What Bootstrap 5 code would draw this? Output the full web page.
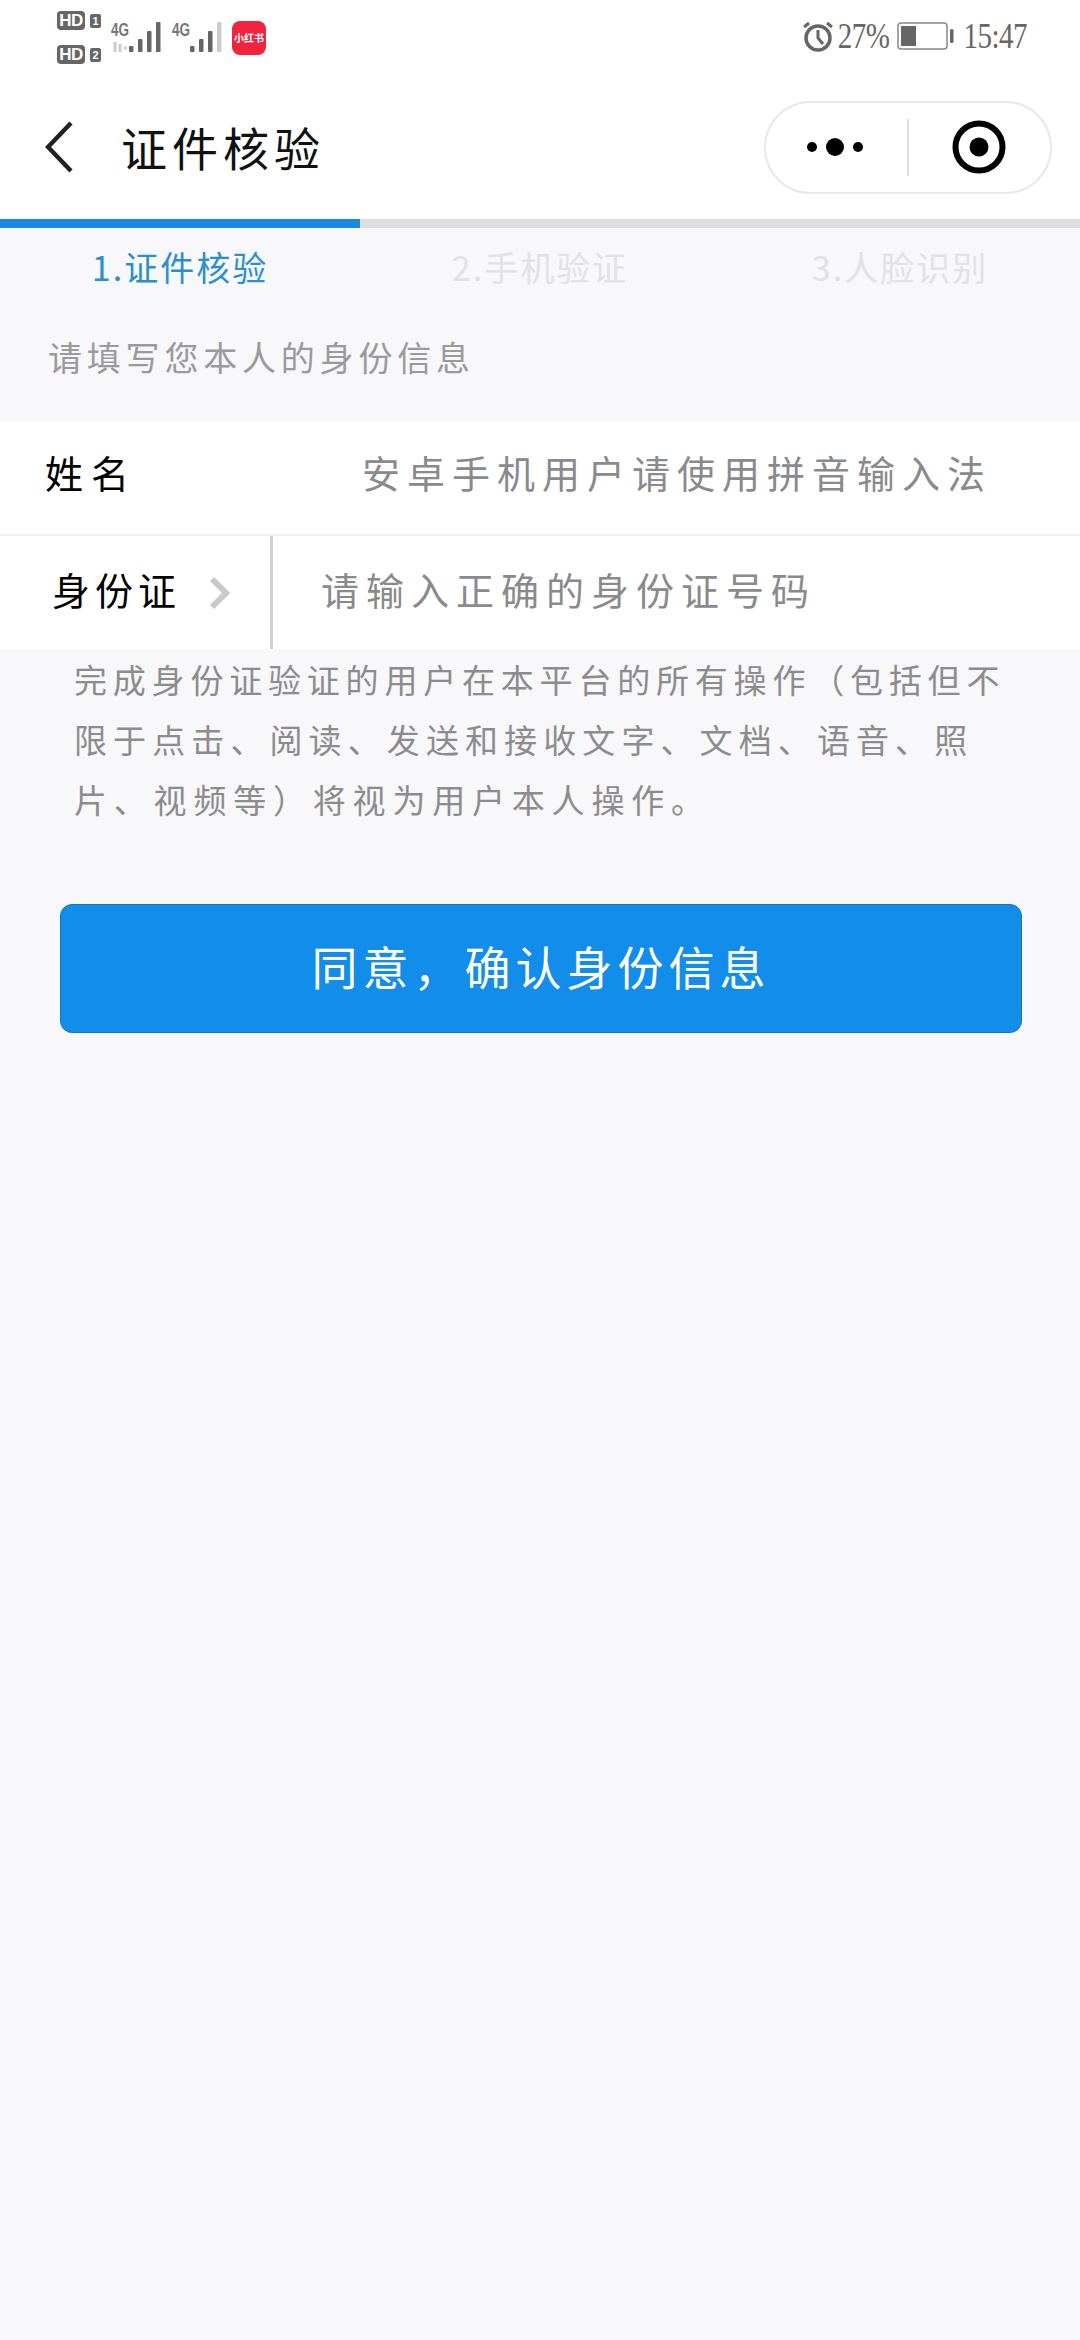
<!DOCTYPE html>
<html lang="zh-CN">
<head>
  <meta charset="UTF-8" />
  <title>证件核验</title>
  <link href="https://cdn.jsdelivr.net/npm/bootstrap@5.3.3/dist/css/bootstrap.min.css" rel="stylesheet" />
  <style>
    body { background: #f8f7f9; font-family: "Noto Sans CJK SC", "Liberation Sans", sans-serif; width: 1080px; min-height: 2340px; }
    .status-strip { height: 80px; padding: 11px 53px 0 57px; background: #fff; color: #666; }
    .hd-stack { width: 46px; gap: 15px; }
    .hd-line { height: 19px; gap: 5px; }
    .hd-tag { width: 28px; height: 19px; background: #666; color: #fff; border-radius: 4px; font: 700 17px/19px "Liberation Sans", sans-serif; letter-spacing: -0.5px; text-align: center; }
    .sim-tag { width: 11px; height: 14px; background: #666; color: #fff; border-radius: 2px; font: 700 11px/14px "Liberation Sans", sans-serif; text-align: center; }
    .app-tag { width: 34px; height: 34px; margin: 10px 0 0 10px; background: #f0243f; color: #fff; border-radius: 8px; font-size: 10px; line-height: 34px; font-weight: 700; text-align: center; white-space: nowrap; }
    .signal-svg { margin: 9px 0 0 8px; }
    .status-right { height: 42px; margin-top: 4px; font: 400 29px/42px "Liberation Serif", serif; letter-spacing: -0.5px; }
    .status-right span { display: inline-block; transform: scaleY(1.2); }
    .title-bar { height: 139px; background: #fff; padding: 0 28px 5px 45px; }
    .title-bar h1 { font-size: 46px; font-weight: 400; letter-spacing: 5px; margin: 0 0 0 48px; color: #111; }
    .capsule { width: 288px; height: 93px; border: 2px solid #e9e9e9; border-radius: 47px; }
    .capsule-line { width: 2px; height: 57px; background: #ddd; }
    .capsule-cell { width: 143px; }
    .step-bar { height: 9px; border-radius: 0; background: #dedede; }
    .step-bar .progress-bar { background: #1a8ae0; }
    .step-tabs { padding-top: 16px; height: 84px; font-size: 34px; letter-spacing: 2px; line-height: 46px; color: #e2e2e5; }
    .step-tabs .now { color: #2b8fcf; }
    .form-tip { height: 109px; padding: 20px 0 0 48px; font-size: 34px; line-height: 50px; letter-spacing: 4.8px; color: #9a9a9c; }
    .field-row { background: #fff; height: 115px; border-bottom: 2px solid #f1f1f2; font-size: 38px; letter-spacing: 7px; color: #8a8a8c; }
    .field-row.last-field { height: 113px; border-bottom: 0; }
    .field-row .up-a { margin-bottom: 12px; }
    .field-row .up-b { margin-bottom: 8px; }
    .field-name { color: #000; }
    .name-cell { margin-left: 45px; width: 317px; letter-spacing: 8px; }
    .id-cell { width: 270px; padding-left: 52px; }
    .id-cell .field-name { width: 157px; letter-spacing: 5px; }
    .id-sep { width: 3px; height: 100%; background: #d2d2d4; }
    .agree-text { padding: 0 0 0 74px; font-size: 33px; line-height: 60px; color: #8c8c8e; white-space: nowrap; }
    .line-a { letter-spacing: 5.8px; }
    .line-b { letter-spacing: 6.1px; }
    .line-c { letter-spacing: 6.8px; }
    .agree-btn { width: 962px; height: 129px; margin: 75px 0 0 60px; padding-bottom: 12px; background: #128dea; border: 1px solid #0f78c4; border-radius: 12px; color: #fff; font-size: 46px; letter-spacing: 5px; }
    .agree-btn:hover { background: #128dea; color: #fff; border-color: #0f78c4; }
  </style>
</head>
<body>
  <div class="status-strip d-flex justify-content-between align-items-start">
    <div class="d-flex align-items-start">
      <div class="hd-stack d-flex flex-column">
        <div class="hd-line d-flex align-items-center"><span class="hd-tag">HD</span><span class="sim-tag">1</span></div>
        <div class="hd-line d-flex align-items-center"><span class="hd-tag">HD</span><span class="sim-tag">2</span></div>
      </div>
      <svg class="signal-svg" width="111" height="46" viewBox="0 0 111 46">
        <text x="0" y="16" font-family="Liberation Sans, sans-serif" font-size="18" font-weight="700" fill="#777" textLength="18" lengthAdjust="spacingAndGlyphs">4G</text>
        <path d="M4 22v10M9 24v8M13 28h3" stroke="#ccc" stroke-width="3" fill="none" />
        <g fill="#666"><rect x="18" y="26" width="4.5" height="6" rx="1" /><rect x="27" y="19" width="4.5" height="13" rx="1" /><rect x="36" y="11" width="4.5" height="21" rx="1" /><rect x="45" y="2" width="4.5" height="30" rx="1" /></g>
        <text x="61" y="16" font-family="Liberation Sans, sans-serif" font-size="18" font-weight="700" fill="#777" textLength="18" lengthAdjust="spacingAndGlyphs">4G</text>
        <g fill="#666"><rect x="79" y="26" width="4.5" height="6" rx="1" /><rect x="88" y="19" width="4.5" height="13" rx="1" /><rect x="97" y="11" width="4.5" height="21" rx="1" /></g>
        <rect x="106" y="2" width="4.5" height="30" rx="1" fill="#ccc" />
      </svg>
      <span class="app-tag">小红书</span>
    </div>
    <div class="status-right d-flex align-items-center">
      <svg width="32" height="32" viewBox="0 0 32 32" fill="none" stroke="#666">
        <circle cx="16" cy="18" r="12" stroke-width="3.5" />
        <path d="M16 10v8l5 6" stroke-width="3" />
        <path d="M2 7l5-4M30 7l-5-4" stroke-width="3" />
      </svg>
      <span class="ms-1">27%</span>
      <svg class="ms-2" width="58" height="28" viewBox="0 0 58 28" fill="none">
        <rect x="1" y="1" width="49" height="26" rx="3" stroke="#888" stroke-width="1.5" />
        <rect x="4" y="4" width="15" height="20" fill="#666" />
        <rect x="53" y="7" width="3.5" height="14" rx="1.5" fill="#666" />
      </svg>
      <span class="ms-2">15:47</span>
    </div>
  </div>

  <div class="title-bar d-flex align-items-center justify-content-between">
    <div class="d-flex align-items-center">
      <svg width="28" height="52" viewBox="0 0 28 52" fill="none" stroke="#222" stroke-width="4.5"><path d="M26 2L3 26l23 24" /></svg>
      <h1>证件核验</h1>
    </div>
    <div class="capsule d-flex align-items-center">
      <div class="capsule-cell d-flex justify-content-center">
        <svg width="62" height="20" viewBox="0 0 62 20" fill="#000"><circle cx="6" cy="10" r="5" /><circle cx="29" cy="10" r="9" /><circle cx="52" cy="10" r="5" /></svg>
      </div>
      <span class="capsule-line"></span>
      <div class="capsule-cell d-flex justify-content-center">
        <svg width="54" height="54" viewBox="0 0 54 54"><circle cx="27" cy="27" r="23.5" fill="none" stroke="#000" stroke-width="6" /><circle cx="27" cy="27" r="9.5" fill="#000" /></svg>
      </div>
    </div>
  </div>

  <div class="progress step-bar"><div class="progress-bar" style="width: 33.34%"></div></div>

  <div class="row g-0 step-tabs text-center">
    <div class="col-4 now">1.证件核验</div>
    <div class="col-4">2.手机验证</div>
    <div class="col-4">3.人脸识别</div>
  </div>

  <div class="form-tip">请填写您本人的身份信息</div>

  <div class="field-row d-flex align-items-center">
    <span class="field-name name-cell up-a">姓名</span>
    <span class="up-a">安卓手机用户请使用拼音输入法</span>
  </div>
  <div class="field-row last-field d-flex align-items-center">
    <div class="id-cell d-flex align-items-center">
      <span class="field-name up-b">身份证</span>
      <svg width="22" height="34" viewBox="0 0 22 34" fill="none" stroke="#c9c9cb" stroke-width="6"><path d="M3 3l14 14L3 31" /></svg>
    </div>
    <span class="id-sep"></span>
    <span class="ms-5 up-b">请输入正确的身份证号码</span>
  </div>

  <div class="agree-text">
    <div class="line-a">完成身份证验证的用户在本平台的所有操作（包括但不</div>
    <div class="line-b">限于点击、阅读、发送和接收文字、文档、语音、照</div>
    <div class="line-c">片、视频等）将视为用户本人操作。</div>
  </div>

  <button type="button" class="btn agree-btn d-flex align-items-center justify-content-center">同意，确认身份信息</button>

  <script src="https://cdn.jsdelivr.net/npm/bootstrap@5.3.3/dist/js/bootstrap.bundle.min.js"></script>
</body>
</html>
